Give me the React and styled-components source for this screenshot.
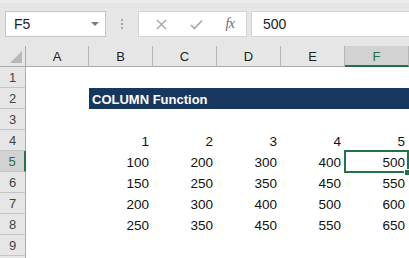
import React from 'react';
import styled, { createGlobalStyle } from 'styled-components';

const GlobalStyle = createGlobalStyle`
  html, body {
    margin: 0;
    padding: 0;
    background: #ffffff;
    overflow: hidden;
  }
  body {
    font-family: "Liberation Sans", Arial, sans-serif;
  }
`;

const Sheet = styled.div`
  width: 409px;
  height: 258px;
  overflow: hidden;
  background: #ffffff;
`;

const Toolbar = styled.div`
  height: 46px;
  box-sizing: border-box;
  background: #e6e6e6;
  border-top: 3px solid #ececec;
  padding: 8px 0 0 5px;
  display: flex;
  align-items: flex-start;
`;

const NameBox = styled.div`
  width: 101px;
  height: 26px;
  box-sizing: border-box;
  background: #ffffff;
  border: 1px solid #c6c6c6;
  display: flex;
  align-items: center;
  justify-content: space-between;
  padding: 0 6px 0 8px;
  font-size: 14px;
  color: #222;
`;

const Caret = styled.span`
  width: 0;
  height: 0;
  border-left: 4px solid transparent;
  border-right: 4px solid transparent;
  border-top: 4px solid #7a7a7a;
`;

const Dots = styled.div`
  width: 32px;
  height: 26px;
  display: flex;
  flex-direction: column;
  align-items: center;
  justify-content: center;
  gap: 2px;
  span {
    width: 2px;
    height: 2px;
    background: #a8a8a8;
  }
`;

const FormulaButtons = styled.div`
  width: 109px;
  height: 26px;
  box-sizing: border-box;
  background: #ffffff;
  border: 1px solid #d4d4d4;
  display: grid;
  grid-template-columns: 36px 35px 1fr;
  align-items: center;
  justify-items: center;
  padding-left: 4px;
`;

const Fx = styled.span`
  font-family: "Liberation Serif", "Times New Roman", serif;
  font-style: italic;
  font-size: 14px;
  color: #6a6a6a;
  letter-spacing: -0.5px;
`;

const FormulaInput = styled.div`
  flex: 1;
  margin-left: 4px;
  height: 26px;
  box-sizing: border-box;
  background: #ffffff;
  border: 1px solid #d4d4d4;
  border-right: none;
  display: flex;
  align-items: center;
  padding-left: 11px;
  font-size: 14px;
  color: #222;
`;

const Grid = styled.div`
  display: grid;
  grid-template-columns: 26px 63px repeat(5, 64px);
  grid-auto-rows: 21px;
`;

const Corner = styled.div`
  background: #e6e6e6;
  border-right: 1px solid #ababab;
  border-bottom: 1px solid #ababab;
  position: relative;
  &::after {
    content: '';
    position: absolute;
    right: 3px;
    bottom: 3px;
    width: 0;
    height: 0;
    border-left: 12px solid transparent;
    border-bottom: 12px solid #b8b8b8;
  }
`;

const ColHead = styled.div`
  background: ${p => (p.$active ? '#d2d2d2' : '#e6e6e6')};
  color: ${p => (p.$active ? '#217346' : '#222')};
  border-right: 1px solid #b6b6b6;
  border-bottom: ${p => (p.$active ? '2px solid #217346' : '1px solid #ababab')};
  display: flex;
  align-items: center;
  justify-content: center;
  font-size: 13px;
  box-sizing: border-box;
  padding-top: ${p => (p.$active ? '1px' : '0')};
  &:last-child {
    border-right: none;
  }
`;

const RowHead = styled.div`
  background: ${p => (p.$active ? '#d2d2d2' : '#e6e6e6')};
  color: ${p => (p.$active ? '#217346' : '#444')};
  border-right: ${p => (p.$active ? '2px solid #217346' : '1px solid #ababab')};
  border-bottom: 1px solid #c4c4c4;
  display: flex;
  align-items: center;
  justify-content: center;
  font-size: 13px;
  box-sizing: border-box;
`;

const Cell = styled.div`
  display: flex;
  align-items: center;
  justify-content: flex-end;
  padding: 1px 4px 0 0;
  font-size: 13.5px;
  color: #111;
  box-sizing: border-box;
  position: relative;
`;

const Selection = styled.span`
  position: absolute;
  left: -1px;
  top: -1px;
  right: 0;
  bottom: -1px;
  border: 2px solid #217346;
  pointer-events: none;
  &::after {
    content: '';
    position: absolute;
    right: -3px;
    bottom: -4px;
    width: 5px;
    height: 5px;
    background: #217346;
    border-left: 1px solid #fff;
    border-top: 1px solid #fff;
  }
`;

const Banner = styled.div`
  grid-column: 3 / span 5;
  background: #17375e;
  color: #ffffff;
  font-weight: bold;
  font-size: 13px;
  display: flex;
  align-items: center;
  padding: 1px 0 0 3px;
`;

const columns = ['A', 'B', 'C', 'D', 'E', 'F'];

const data = {
  4: [1, 2, 3, 4, 5],
  5: [100, 200, 300, 400, 500],
  6: [150, 250, 350, 450, 550],
  7: [200, 300, 400, 500, 600],
  8: [250, 350, 450, 550, 650],
};

const XIcon = () => (
  <svg width="11" height="11" viewBox="0 0 11 11">
    <path d="M1 1 L10 10 M10 1 L1 10" stroke="#a6a6a6" strokeWidth="1.4" fill="none" />
  </svg>
);

const CheckIcon = () => (
  <svg width="13" height="11" viewBox="0 0 13 11">
    <path d="M1 6 L4.5 9.5 L12 1.5" stroke="#a6a6a6" strokeWidth="1.6" fill="none" />
  </svg>
);

export default function App() {
  // row 10 only peeks in at the bottom edge, so its label stays hidden
  const rows = [1, 2, 3, 4, 5, 6, 7, 8, 9, 10];
  return (
    <Sheet>
      <GlobalStyle />
      <Toolbar>
        <NameBox>
          F5
          <Caret />
        </NameBox>
        <Dots>
          <span />
          <span />
          <span />
        </Dots>
        <FormulaButtons>
          <XIcon />
          <CheckIcon />
          <Fx>fx</Fx>
        </FormulaButtons>
        <FormulaInput>500</FormulaInput>
      </Toolbar>
      <Grid>
        <Corner />
        {columns.map(c => (
          <ColHead key={c} $active={c === 'F'}>{c}</ColHead>
        ))}
        {rows.map(r => (
          <React.Fragment key={r}>
            <RowHead $active={r === 5}>{r < 10 ? r : ''}</RowHead>
            <Cell />
            {r === 2 ? (
              <Banner>COLUMN Function</Banner>
            ) : (
              [0, 1, 2, 3, 4].map(i => (
                <Cell key={i}>
                  {data[r] ? data[r][i] : ''}
                  {r === 5 && i === 4 && <Selection />}
                </Cell>
              ))
            )}
          </React.Fragment>
        ))}
      </Grid>
    </Sheet>
  );
}
